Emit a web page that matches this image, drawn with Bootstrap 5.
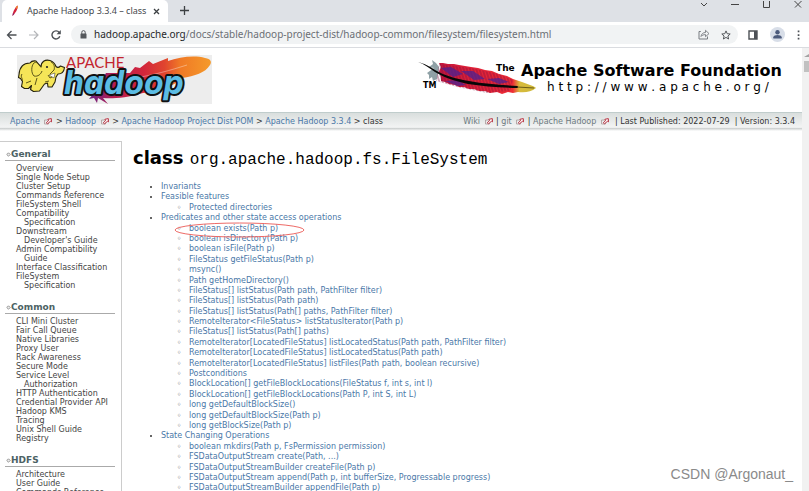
<!DOCTYPE html>
<html lang="en">
<head>
<meta charset="utf-8">
<meta name="viewport" content="width=device-width, initial-scale=1">
<title>Apache Hadoop 3.3.4 – class</title>
<link rel="stylesheet" href="https://cdn.jsdelivr.net/npm/bootstrap@5.3.0/dist/css/bootstrap.min.css">
<style>
body { font-family: "DejaVu Sans", sans-serif; font-size: 8px; line-height: 9px; color: #333; background: #fff; }
a { color: #4a78a8; text-decoration: none; }
a:hover { text-decoration: underline; }
svg { display: block; flex: none; }
button { border: 0; background: none; padding: 0; color: #444; }
.tabstrip { background: #dee1e6; height: 22px; padding-left: 2px; }
.browser-tab { background: #fff; border-radius: 5px 5px 0 0; width: 166px; padding: 0 8px 0 9px; font: 9px/22px "Noto Sans", sans-serif; color: #45484c; white-space: nowrap; }
.win-controls { gap: 23px; padding-right: 7px; height: 10px; }
.toolbar { height: 26px; padding: 0 9px 0 6px; border-bottom: 1px solid #dadce0; gap: 12px; }
.address { height: 19px; border-radius: 10px; background: #f1f3f4; margin: 0 -2px; padding: 0 7px 0 9px; gap: 7px; }
.url-host { color: #26282b; }
.url { font: 10px/19px "Noto Sans", sans-serif; color: #6b6f74; white-space: nowrap; }
.avatar { width: 15px; height: 15px; border-radius: 50%; background: #d8dee8; overflow: hidden; }
.scroller { width: 7px; background: #f1f1f1; padding: 6px 0 0 2px; }
.scroller-arrow { width: 5px; height: 3px; background: #a3a3a3; clip-path: polygon(0 100%, 100% 0, 100% 100%); }
.scroller-thumb { height: 11px; background: #c1c1c1; margin-top: 4px; }
.banner { padding: 7px 12px 8px 17px; }
.crumbs { height: 19px; padding: 0 7px 0 10px; border-top: 1px solid #c0cdcc; background: linear-gradient(#d9dedd, #f3f4f4 80%, #c8cccc 84%, #fff); color: #333; line-height: 17px; }
.crumbs a.muted-link { color: #6d7a80; }
.ext { display: inline-block; vertical-align: -1px; margin: 0 1px 0 2px; }
.content-row { padding-top: 10px; }
.sidebar { width: 122px; flex: none; border: solid #ccc; border-width: 1px 1px 0 0; padding: 7px 6px 0 5px; }
.sidebar h5 { font-size: 9px; line-height: 11px; font-weight: bold; color: #4c6264; border-bottom: 1px solid #aaa; margin: 0 0 3px; padding-left: 1px; }
.sidebar ul { margin: 0 -5px 12px 0; padding-left: 19px; }
.sidebar li { text-indent: -8px; }
.sidebar a { color: #444; }
.sidebar .wrap-tail { display: block; text-indent: 0; }
.article { padding: 5px 11px 0; }
.article h1 { font-size: 18px; line-height: 24px; font-weight: bold; color: #000; margin: 0 0 10px; }
.article h1 code { font: 16px/24px "Liberation Mono", monospace; color: #000; }
.toc { line-height: 1.3; margin: 0; padding-left: 28px; }
.toc ul { padding-left: 28px; margin: 0; list-style-type: "◦\00a0\00a0\00a0"; }
.ring { position: absolute; left: -15px; top: -2px; }
.watermark { position: absolute; right: 16px; bottom: 8px; font: 14px/18px "Liberation Sans", sans-serif; color: #8a8a8a; }
</style>
<script src="https://cdn.jsdelivr.net/npm/bootstrap@5.3.0/dist/js/bootstrap.bundle.min.js"></script>
</head>
<body class="vh-100 overflow-hidden d-flex flex-column position-relative">
<svg width="0" height="0" class="position-absolute" aria-hidden="true">
  <symbol id="ext" viewBox="0 0 8 7"><path d="M4 2H.5v4h4V4.500" fill="none" stroke="#a99" stroke-width=".8"/><path d="M2.300 4.800 4.600 2.600 3.900 1.300 7.300.6 7.500 3.800 6.400 3.300 3.600 5.700z" fill="#fff" stroke="#b11c2c" stroke-width=".9"/></symbol>
  <symbol id="bullet" viewBox="0 0 5 5"><path d="M.8 2.500 2.500.8 4.200 2.500 2.500 4.200z" fill="#eee" stroke="#888" stroke-width=".9"/></symbol>
</svg>

<div class="tabstrip d-flex align-items-start flex-shrink-0">
  <div class="browser-tab d-flex align-items-center">
    <svg width="8" height="12" viewBox="0 0 8 12"><path d="M1.500 11C1.500 8 3.500 3 6.500.5 7.300 3 5 7.500 2.700 9.500z" fill="#d3243c"/><path d="M4.500 3C5 1.800 5.800 1 6.500.5c.5 1.200 0 2.700-.4 3.600z" fill="#f0852c"/><path d="M1.500 11 2 8l1.300 1z" fill="#7a2172"/></svg>
    <span class="ms-2 flex-grow-1">Apache Hadoop 3.3.4 – class</span>
    <button type="button" aria-label="Close tab"><svg width="7" height="7" viewBox="0 0 7 7"><path d="M1 1l5 5M6 1 1 6" stroke="#3c4043" stroke-width="1.300"/></svg></button>
  </div>
  <button type="button" class="ms-2 mt-1 ps-1" aria-label="New tab"><svg width="9" height="13" viewBox="0 0 9 13"><path d="M4.500 2v9M0 6.500h9" stroke="#3c4043" stroke-width="1.300"/></svg></button>
  <div class="win-controls d-flex align-items-center ms-auto">
    <button type="button" aria-label="Search tabs"><svg width="8" height="8" viewBox="0 0 8 8"><path d="M1 2l3 3 3-3" fill="none" stroke="#444"/></svg></button>
    <button type="button" aria-label="Minimize"><svg width="8" height="8" viewBox="0 0 8 8"><path d="M0 3.500h8" stroke="#444"/></svg></button>
    <button type="button" aria-label="Maximize"><svg width="9" height="8" viewBox="0 0 9 8"><path d="M1.500-2.500v9h6v-9" fill="none" stroke="#444"/></svg></button>
    <button type="button" aria-label="Close"><svg width="8" height="8" viewBox="0 0 8 8"><path d="M.5 0l6.500 6.500M7.500 0 1 6.500" stroke="#444"/></svg></button>
  </div>
</div>

<div class="toolbar d-flex align-items-center flex-shrink-0">
  <button type="button" aria-label="Back"><svg width="11" height="10" viewBox="0 0 11 10"><path d="M10.500 5H1.500M5.500 1l-4 4 4 4" fill="none" stroke="#4d5156" stroke-width="1.300"/></svg></button>
  <button type="button" aria-label="Forward"><svg width="10" height="10" viewBox="0 0 10 10"><path d="M0 5h8.500M5 1l4 4-4 4" fill="none" stroke="#b4b6b9" stroke-width="1.200"/></svg></button>
  <button type="button" aria-label="Reload"><svg width="10" height="10" viewBox="0 0 10 10"><path d="M8.800 6.200A4 4 0 1 1 8.200 2.500" fill="none" stroke="#4d5156" stroke-width="1.400"/><path d="M9.800 0v4.200H5.600z" fill="#4d5156"/></svg></button>
  <div class="address d-flex align-items-center flex-grow-1">
    <svg width="7" height="9" viewBox="0 0 7 9"><path d="M1.800 4V2.300a1.700 1.700 0 0 1 3.400 0V4" fill="none" stroke="#55585c"/><rect x=".5" y="3.500" width="6" height="5" rx=".6" fill="#55585c"/></svg>
    <span class="url flex-grow-1"><span class="url-host">hadoop.apache.org</span>/docs/stable/hadoop-project-dist/hadoop-common/filesystem/filesystem.html</span>
    <button type="button" class="me-1" aria-label="Share"><svg width="12" height="11" viewBox="0 0 12 11"><path d="M2.800 2.500H1v7.500h8.500V7.500" fill="none" stroke="#777b80"/><path d="M3 7.500c.3-2.500 2-4 4.500-4V1.300L11 4.600 7.500 7.700V5.600C5.500 5.600 4 6.200 3 7.500z" fill="none" stroke="#777b80" stroke-width=".9"/></svg></button>
    <button type="button" aria-label="Bookmark"><svg width="10" height="10" viewBox="0 0 10 10"><path d="M5 .9 6.200 3.700l3 .3L6.900 6l.7 3L5 7.400 2.400 9l.7-3L.8 4l3-.3z" fill="none" stroke="#55585c"/></svg></button>
  </div>
  <button type="button" aria-label="Side panel"><svg width="10" height="10" viewBox="0 0 10 10"><path d="M1 1h8v8H1z" fill="none" stroke="#4d5156" stroke-width="1.400"/><path d="M6 1h3v8H6z" fill="#4d5156"/></svg></button>
  <button type="button" class="avatar" aria-label="Profile"><svg width="15" height="15" viewBox="0 0 15 15"><circle cx="7.500" cy="5.300" r="2.200" fill="#4c5b7c"/><path d="M3.300 11.500V10.300c0-1.500 2.500-2.200 4.200-2.200s4.200.7 4.200 2.200v1.200z" fill="#4c5b7c"/></svg></button>
  <button type="button" aria-label="Menu"><svg width="3" height="10" viewBox="0 0 3 10"><path d="M.7.500h1.700v1.700H.7zM.7 4.200h1.700v1.700H.7zM.7 7.800h1.700v1.700H.7z" fill="#4d5156"/></svg></button>
</div>

<div class="d-flex flex-grow-1 overflow-hidden">
  <div class="flex-grow-1 d-flex flex-column overflow-hidden">
    <header class="banner d-flex justify-content-between flex-shrink-0">
      <a href="#" aria-label="Apache Hadoop"><svg width="195" height="49" viewBox="0 0 195 49">
        <defs><linearGradient id="plume"><stop offset="0" stop-color="#6b2482"/><stop offset=".2" stop-color="#b51d53"/><stop offset=".45" stop-color="#d3263b"/><stop offset=".62" stop-color="#e0452f"/><stop offset=".75" stop-color="#f07a26"/><stop offset="1" stop-color="#f59a2a"/></linearGradient></defs>
        <path d="M0 0h195v49H0z" fill="#ededed"/>
        <path d="M72 44l5-6 12-20 24 0 5-6 5 1 9-7 4 3 15-6 0 3C162 2 178 0 188 3c6 1 7 4 5 7-5 8-15 11-28 13-9 9-22 13-39 15-17 5-32 6-40 5l5 6-10-6-1 5-3-5z" fill="url(#plume)"/>
        <path d="M112 24c26-4 42-9 58-14" stroke="#fff" stroke-width=".6" fill="none" opacity=".6"/>
        <path d="M24 12C24 7 28 4 33 5.500c3 1 5 3 6 6 1.500 1.500 3 1 4.500-.5l4 1.500c-.5 4-3 6.500-6.500 6.500l-2 3-1 5-3 5h-4l-.5-4-3 1-5 7-6 .5-3-2 1-4-3 3-4 0-3-2 1-5-2-3-2-1 .5-3C2.500 13 6 8 13 8c1-1.500 3-2.500 6-2z" fill="#f5e558" stroke="#25220c" stroke-width="1.100" stroke-linejoin="round"/>
        <path d="M24 12c-2-3-5-6-7-4-3 3-3 10 0 13 4 1 7-2 8-5M34 7c3 1 4 5 3 8l-4 4M5 19c-2 3 1 4 0 7M20 23l-2 7M28 27l4-1M9 28l5-2M31 20l2 3 4-2" fill="none" stroke="#4b4511" stroke-width=".9"/><circle cx="30" cy="12" r="1.100" fill="#222"/><path d="M32 20l6-2-1 5z" fill="#fff" stroke="#333" stroke-width=".5"/>
        <text x="49" y="13" font-family="Lato, sans-serif" font-size="15" fill="#c3242f">APACHE</text>
        <text x="47" y="39" font-family="Inter, sans-serif" font-weight="700" font-style="italic" font-size="32" fill="#5bbce4" stroke="#111" stroke-width="4" stroke-linejoin="round" paint-order="stroke">hadoop</text>
      </svg></a>
      <a href="#" aria-label="The Apache Software Foundation"><svg width="373" height="49" viewBox="0 0 373 49">
        <defs>
          <linearGradient id="quill"><stop offset="0" stop-color="#c3163d"/><stop offset=".3" stop-color="#e02138"/><stop offset=".76" stop-color="#ee2c36"/><stop offset=".83" stop-color="#d8bb3c"/><stop offset="1" stop-color="#cdb83a"/></linearGradient>
          <pattern id="barbs" width="3" height="12" patternUnits="userSpaceOnUse" patternTransform="rotate(-18)"><path d="M1 0v12" stroke="#7a0c3e" stroke-width=".7"/></pattern>
        </defs>
        <path d="M10 18l7-5-5-1 4-3-1-4 4 3 3 4-2 12-4 2-1-4-3 2 0-4z" fill="#8fa1a6"/>
        <g stroke-linejoin="round">
          <path d="M22 8l4 0 5 1 6 0 5 1 6 1 6 1 7 1 7 2 7 1 7 3 8 2 6 3 9 3 8 3c3 1 5 2 6 3-5 4-11 5-18 4l-5 1-5-1-6 2-5-2-7 1-5-2-6 0-5-2-5 0-5-2-5 0-4-2-6-1-4-2-4-1 0-4-2-5 2-5z" fill="url(#quill)"/>
          <path d="M22 9l32 4 28 6 14 6-3 11-23 2-30-6-21-6z" fill="url(#barbs)"/>
        </g>
        <path d="M24 13l12 9 10-3-12-7zM44 16l13 9 11-1-12-8zM70 24l12 5 10-2-10-4zM28 26l12-1 9 5-8 1zM60 33l16-2" fill="#4c2191" opacity=".75"/>
        <path d="M1 7c7 2 11 4 17 8 10 6 22 9 34 11 16 3 32 4 49 5v2c-18 0-35-2-50-4-14-3-25-7-33-12C12 13 7 9 1 7z" fill="#070707"/><path d="M100 32l17 1" stroke="#6a5a18"/>
        <text x="6" y="33" font-family="DejaVu Sans, sans-serif" font-weight="bold" font-size="8">TM</text>
        <g font-family="DejaVu Sans, sans-serif" fill="#000"><text x="79" y="16" font-weight="bold" font-size="9">The</text><text x="104" y="21" font-weight="bold" font-size="16">Apache Software Foundation</text><text x="130" y="36" font-size="12">h t t p : / / w w w . a p a c h e . o r g /</text></g>
      </svg></a>
    </header>

    <nav class="crumbs d-flex justify-content-between flex-shrink-0 text-nowrap" aria-label="Breadcrumb">
      <div><a href="#">Apache <svg class="ext" width="8" height="7"><use href="#ext"/></svg></a> &gt; <a href="#">Hadoop <svg class="ext" width="8" height="7"><use href="#ext"/></svg></a> &gt; <a href="#">Apache Hadoop Project Dist POM</a> &gt; <a href="#">Apache Hadoop 3.3.4</a> &gt; class</div>
      <div><a class="muted-link" href="#">Wiki <svg class="ext" width="8" height="7"><use href="#ext"/></svg></a> | <a class="muted-link" href="#">git <svg class="ext" width="8" height="7"><use href="#ext"/></svg></a> | <a class="muted-link" href="#">Apache Hadoop <svg class="ext" width="8" height="7"><use href="#ext"/></svg></a> &nbsp;| Last Published: 2022-07-29 &nbsp;| Version: 3.3.4</div>
    </nav>

    <div class="content-row d-flex">
      <nav class="sidebar" aria-label="Documentation">
        <h5 class="d-flex align-items-center"><svg width="5" height="5"><use href="#bullet"/></svg>General</h5>
        <ul class="list-unstyled">
          <li><a href="#">Overview</a></li>
          <li><a href="#">Single Node Setup</a></li>
          <li><a href="#">Cluster Setup</a></li>
          <li><a href="#">Commands Reference</a></li>
          <li><a href="#">FileSystem Shell</a></li>
          <li><a href="#">Compatibility <span class="wrap-tail">Specification</span></a></li>
          <li><a href="#">Downstream <span class="wrap-tail">Developer's Guide</span></a></li>
          <li><a href="#">Admin Compatibility <span class="wrap-tail">Guide</span></a></li>
          <li class="text-nowrap"><a href="#">Interface Classification</a></li>
          <li><a href="#">FileSystem <span class="wrap-tail">Specification</span></a></li>
        </ul>
        <h5 class="d-flex align-items-center"><svg width="5" height="5"><use href="#bullet"/></svg>Common</h5>
        <ul class="list-unstyled">
          <li><a href="#">CLI Mini Cluster</a></li>
          <li><a href="#">Fair Call Queue</a></li>
          <li><a href="#">Native Libraries</a></li>
          <li><a href="#">Proxy User</a></li>
          <li><a href="#">Rack Awareness</a></li>
          <li><a href="#">Secure Mode</a></li>
          <li><a href="#">Service Level <span class="wrap-tail">Authorization</span></a></li>
          <li><a href="#">HTTP Authentication</a></li>
          <li class="text-nowrap"><a href="#">Credential Provider API</a></li>
          <li><a href="#">Hadoop KMS</a></li>
          <li><a href="#">Tracing</a></li>
          <li><a href="#">Unix Shell Guide</a></li>
          <li><a href="#">Registry</a></li>
        </ul>
        <h5 class="d-flex align-items-center"><svg width="5" height="5"><use href="#bullet"/></svg>HDFS</h5>
        <ul class="list-unstyled">
          <li><a href="#">Architecture</a></li>
          <li><a href="#">User Guide</a></li>
          <li><a href="#">Commands Reference</a></li>
        </ul>
      </nav>
      <main class="article flex-grow-1">
        <h1>class <code>org.apache.hadoop.fs.FileSystem</code></h1>
        <ul class="toc">
          <li><a href="#">Invariants</a></li>
          <li><a href="#">Feasible features</a>
            <ul><li><a href="#">Protected directories</a></li></ul></li>
          <li><a href="#">Predicates and other state access operations</a>
            <ul>
              <li class="position-relative"><a href="#">boolean exists(Path p)</a><svg class="ring" width="131" height="16" viewBox="0 0 131 16"><ellipse cx="65.500" cy="8" rx="64.500" ry="7" fill="none" stroke="#ee6a66"/></svg></li>
              <li><a href="#">boolean isDirectory(Path p)</a></li>
              <li><a href="#">boolean isFile(Path p)</a></li>
              <li><a href="#">FileStatus getFileStatus(Path p)</a></li>
              <li><a href="#">msync()</a></li>
              <li><a href="#">Path getHomeDirectory()</a></li>
              <li><a href="#">FileStatus[] listStatus(Path path, PathFilter filter)</a></li>
              <li><a href="#">FileStatus[] listStatus(Path path)</a></li>
              <li><a href="#">FileStatus[] listStatus(Path[] paths, PathFilter filter)</a></li>
              <li><a href="#">RemoteIterator&lt;FileStatus&gt; listStatusIterator(Path p)</a></li>
              <li><a href="#">FileStatus[] listStatus(Path[] paths)</a></li>
              <li><a href="#">RemoteIterator[LocatedFileStatus] listLocatedStatus(Path path, PathFilter filter)</a></li>
              <li><a href="#">RemoteIterator[LocatedFileStatus] listLocatedStatus(Path path)</a></li>
              <li><a href="#">RemoteIterator[LocatedFileStatus] listFiles(Path path, boolean recursive)</a></li>
              <li><a href="#">Postconditions</a></li>
              <li><a href="#">BlockLocation[] getFileBlockLocations(FileStatus f, int s, int l)</a></li>
              <li><a href="#">BlockLocation[] getFileBlockLocations(Path P, int S, int L)</a></li>
              <li><a href="#">long getDefaultBlockSize()</a></li>
              <li><a href="#">long getDefaultBlockSize(Path p)</a></li>
              <li><a href="#">long getBlockSize(Path p)</a></li>
            </ul></li>
          <li><a href="#">State Changing Operations</a>
            <ul>
              <li><a href="#">boolean mkdirs(Path p, FsPermission permission)</a></li>
              <li><a href="#">FSDataOutputStream create(Path, ...)</a></li>
              <li><a href="#">FSDataOutputStreamBuilder createFile(Path p)</a></li>
              <li><a href="#">FSDataOutputStream append(Path p, int bufferSize, Progressable progress)</a></li>
              <li><a href="#">FSDataOutputStreamBuilder appendFile(Path p)</a></li>
            </ul></li>
        </ul>
      </main>
    </div>
  </div>
  <div class="scroller flex-shrink-0"><div class="scroller-arrow"></div><div class="scroller-thumb"></div></div>
</div>
<div class="watermark">CSDN @Argonaut_</div>
</body>
</html>
